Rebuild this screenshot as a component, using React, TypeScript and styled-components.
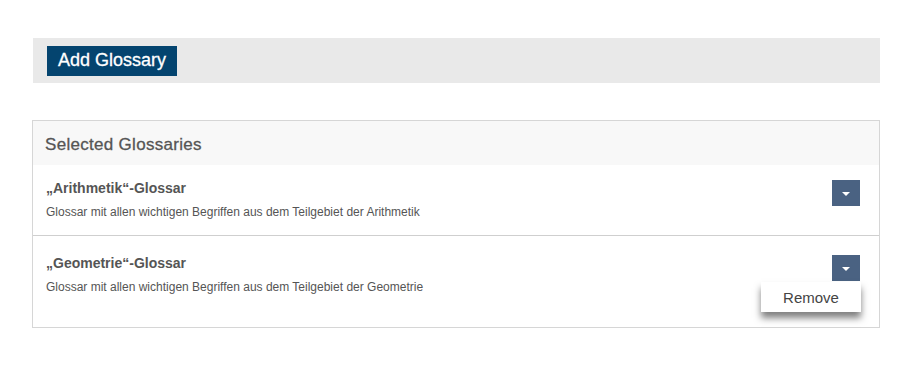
import React from 'react'
import styled, { createGlobalStyle } from 'styled-components'

const GlobalStyle = createGlobalStyle`
    body {
        margin: 0;
        background: #fff;
        font-family: "Liberation Sans", Arial, Helvetica, sans-serif;
        color: #555;
    }
`

const Page = styled.div`
    padding: 38px 32px 40px 33px;
`

const Toolbar = styled.div`
    display: flex;
    align-items: center;
    height: 45px;
    padding: 0 14px;
    background-color: #e9e9e9;
`

const AddButton = styled.button`
    height: 30px;
    padding: 0 11px;
    border: none;
    background-color: #04446f;
    color: #fff;
    font-family: inherit;
    font-size: 18px;
    -webkit-text-stroke: 0.3px #fff;
    cursor: pointer;
`

const Panel = styled.div`
    margin-top: 37px;
    border: 1px solid #d6d6d6;
    margin-left: -1px;
`

const PanelHeader = styled.div`
    height: 44px;
    box-sizing: border-box;
    display: flex;
    align-items: center;
    padding: 4px 12px 0;
    background-color: #f8f8f8;
    font-size: 17px;
    letter-spacing: 0.3px;
    color: #555;
    -webkit-text-stroke: 0.3px #555;
`

const Row = styled.div<{ $top: number }>`
    display: flex;
    justify-content: space-between;
    align-items: flex-start;
    min-height: 70px;
    box-sizing: border-box;
    padding: ${p => p.$top}px 19px 15px 13px;
    & + & {
        border-top: 1px solid #cfcfcf;
    }
`

const Info = styled.div`
    display: flex;
    flex-direction: column;
    gap: 6px;
`

const Title = styled.div`
    font-size: 14px;
    font-weight: bold;
    line-height: 20px;
    color: #555;
`

const Description = styled.div`
    font-size: 12px;
    line-height: 16px;
    color: #555;
`

const Actions = styled.div`
    display: flex;
    flex-direction: column;
    align-items: flex-end;
    margin-top: 2px;
`

const ToggleButton = styled.button`
    width: 28px;
    height: 26px;
    padding: 0;
    border: none;
    background-color: #4a6282;
    display: flex;
    align-items: center;
    justify-content: center;
    cursor: pointer;
`

const Caret = styled.span`
    width: 0;
    height: 0;
    border-left: 4px solid transparent;
    border-right: 4px solid transparent;
    border-top: 4px solid #fff;
    margin-top: 1px;
`

const Menu = styled.div`
    margin-top: 1px;
    margin-right: -1px;
    width: 100px;
    height: 30px;
    display: flex;
    align-items: center;
    justify-content: center;
    background-color: #fff;
    box-shadow: 0 6px 7px rgba(0, 0, 0, 0.5);
    font-size: 15px;
    color: #444;
    cursor: pointer;
`

const glossaries = [
    { id: '0', title: '„Arithmetik“-Glossar', text: 'Glossar mit allen wichtigen Begriffen aus dem Teilgebiet der Arithmetik', open: false },
    { id: '1', title: '„Geometrie“-Glossar', text: 'Glossar mit allen wichtigen Begriffen aus dem Teilgebiet der Geometrie', open: true },
]

const App = () => {
    return (
        <>
            <GlobalStyle />
            <Page>
                <Toolbar>
                    <AddButton>Add Glossary</AddButton>
                </Toolbar>
                <Panel>
                    <PanelHeader>Selected Glossaries</PanelHeader>
                    {
                        glossaries.map((g) => {
                            return (
                                <Row key={g.id} $top={g.open ? 17 : 13}>
                                    <Info>
                                        <Title>{g.title}</Title>
                                        <Description>{g.text}</Description>
                                    </Info>
                                    <Actions>
                                        <ToggleButton><Caret /></ToggleButton>
                                        {g.open && <Menu>Remove</Menu>}
                                    </Actions>
                                </Row>
                            )
                        })
                    }
                </Panel>
            </Page>
        </>
    )
}

export default App
